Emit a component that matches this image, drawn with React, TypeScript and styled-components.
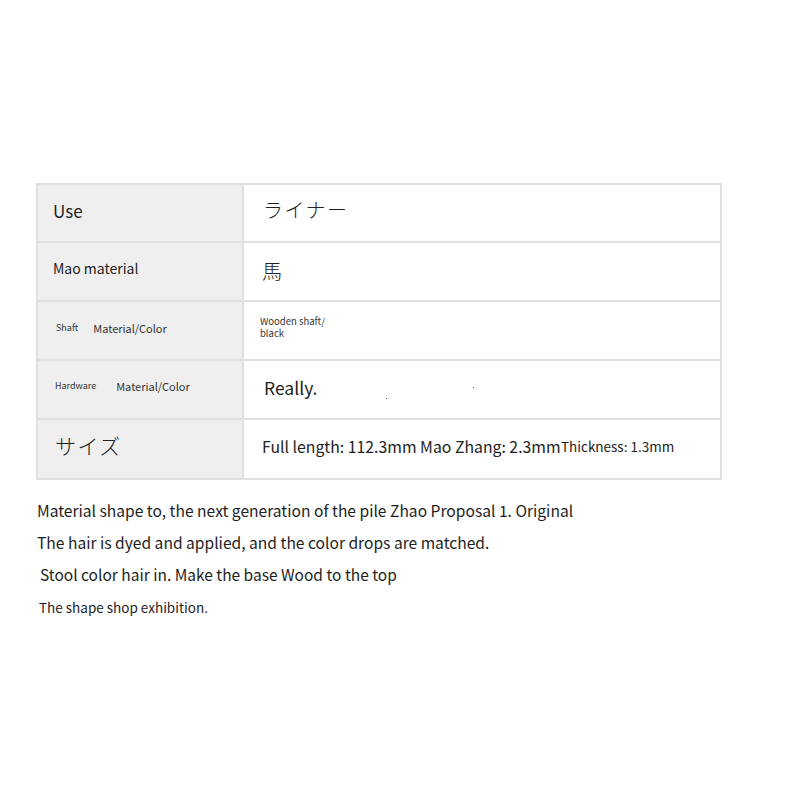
import React from "react";
import styled, {createGlobalStyle} from "styled-components";

const Global = createGlobalStyle`
    html, body {
        margin: 0;
        padding: 0;
        background: #ffffff;
    }
    body {
        font-family: "Noto Sans CJK JP", "Noto Sans", sans-serif;
        color: #222;
    }
`

const Page = styled.div`
    width: 800px;
    height: 800px;
    padding: 183px 0 0 36px;
    box-sizing: border-box;
`

const Table = styled.div`
    width: 686px;
    display: grid;
    grid-template-columns: 206px 1fr;
    border-top: 2px solid #e0e0e0;
    border-left: 2px solid #e0e0e0;
    box-sizing: border-box;
`

const Cell = styled.div<{$label?: boolean; $h: number}>`
    height: ${p => p.$h}px;
    box-sizing: border-box;
    background: ${p => (p.$label ? "#efefef" : "#ffffff")};
    border-right: 2px solid #e0e0e0;
    border-bottom: 2px solid #e0e0e0;
    display: flex;
    align-items: center;
    position: relative;
    white-space: nowrap;
`

const Txt = styled.span<{$size: number; $x: number; $dy?: number; $color?: string}>`
    font-size: ${p => p.$size}px;
    margin-left: ${p => p.$x}px;
    position: relative;
    top: ${p => p.$dy ?? 0}px;
    color: ${p => p.$color ?? "#222"};
    line-height: 1.2;
`

const Jp = styled(Txt)`
    font-weight: 300;
    letter-spacing: 1.5px;
`

const Small = styled.span`
    display: flex;
    flex-direction: column;
    font-size: 9.5px;
    line-height: 11.5px;
    margin-left: 16px;
    color: #333;
    position: relative;
    top: -3px;
`

const Speck = styled.span<{$x: number; $y: number}>`
    position: absolute;
    left: ${p => p.$x}px;
    top: ${p => p.$y}px;
    width: 1px;
    height: 1px;
    background: #555;
`

const Sizes = styled.div`
    display: flex;
    align-items: center;
    position: relative;
    top: -3px;
    margin-left: 18px;
`

const Clip = styled.span`
    display: inline-block;
    width: 299px;
    overflow: hidden;
    font-size: 15.8px;
    color: #222;
`

const Thick = styled.span`
    font-size: 13.5px;
    color: #222;
`

const Notes = styled.div`
    display: flex;
    flex-direction: column;
    padding-top: 20px;
`

const Line = styled.p<{$size: number; $x: number; $gap: number}>`
    margin: 0 0 ${p => p.$gap}px ${p => p.$x}px;
    font-size: ${p => p.$size}px;
    line-height: 20px;
    color: #1e1e1e;
`

export default function App() {
    return (
        <>
            <Global/>
            <Page>
                <Table>
                    <Cell $label $h={58}><Txt $size={17} $x={15} $dy={-2}>Use</Txt></Cell>
                    <Cell $h={58}><Jp $size={20} $x={19} $dy={-3}>ライナー</Jp></Cell>

                    <Cell $label $h={59}><Txt $size={14} $x={15} $dy={-3}>Mao material</Txt></Cell>
                    <Cell $h={59}><Jp $size={20} $x={18} $dy={-1}>馬</Jp></Cell>

                    <Cell $label $h={59}>
                        <Txt $size={9} $x={18} $dy={-2} $color="#333">Shaft</Txt>
                        <Txt $size={11} $x={15} $dy={-2} $color="#333">Material/Color</Txt>
                    </Cell>
                    <Cell $h={59}>
                        <Small>
                            <span>Wooden shaft/</span>
                            <span>black</span>
                        </Small>
                    </Cell>

                    <Cell $label $h={59}>
                        <Txt $size={9} $x={17} $dy={-3} $color="#333">Hardware</Txt>
                        <Txt $size={11} $x={20} $dy={-3} $color="#333">Material/Color</Txt>
                    </Cell>
                    <Cell $h={59}>
                        <Txt $size={17.5} $x={20} $dy={-2}>Really.</Txt>
                        <Speck $x={142} $y={37}/>
                        <Speck $x={229} $y={26}/>
                    </Cell>

                    <Cell $label $h={60}><Jp $size={21} $x={17} $dy={-3}>サイズ</Jp></Cell>
                    <Cell $h={60}>
                        <Sizes>
                            <Clip>Full length: 112.3mm Mao Zhang: 2.3mm</Clip>
                            <Thick>Thickness: 1.3mm</Thick>
                        </Sizes>
                    </Cell>
                </Table>
                <Notes>
                    <Line $size={15.6} $x={1} $gap={12}>Material shape to, the next generation of the pile Zhao Proposal 1. Original</Line>
                    <Line $size={15.6} $x={1} $gap={12}>The hair is dyed and applied, and the color drops are matched.</Line>
                    <Line $size={15.5} $x={4} $gap={13}>Stool color hair in. Make the base Wood to the top</Line>
                    <Line $size={13.5} $x={3} $gap={0}>The shape shop exhibition.</Line>
                </Notes>
            </Page>
        </>
    );
}
